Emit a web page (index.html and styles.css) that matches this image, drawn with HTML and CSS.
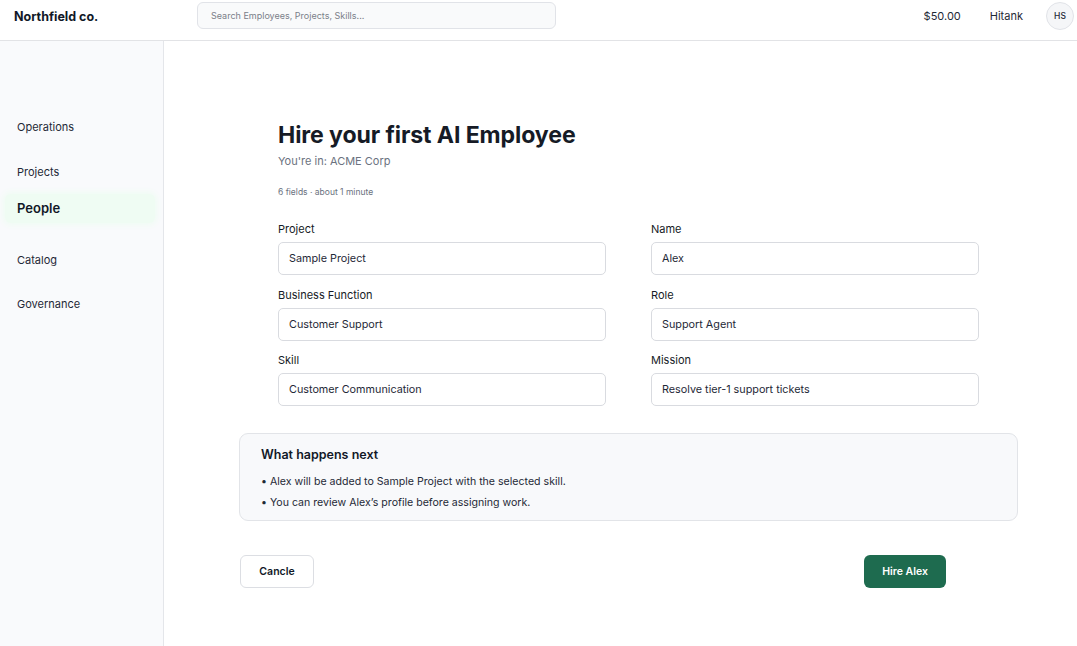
FILE: index.html
```html
<!DOCTYPE html>
<html lang="en">

<head>
    <meta charset="UTF-8">
    <meta name="viewport" content="width=device-width, initial-scale=1.0">
    <title>Northfield co. - Hire</title>
    <link rel="stylesheet" href="styles.css">
</head>

<body>
    <header class="topbar">
        <div class="brand">Northfield co.</div>
        <div class="search">Search Employees, Projects, Skills...</div>
        <div class="topbar-right">
            <span class="balance">$50.00</span>
            <span class="user-name">Hitank</span>
            <div class="avatar">HS</div>
        </div>
    </header>

    <div class="layout">
        <nav class="sidebar">
            <a class="nav-item">Operations</a>
            <a class="nav-item">Projects</a>
            <a class="nav-item active">People</a>
            <a class="nav-item">Catalog</a>
            <a class="nav-item">Governance</a>
        </nav>

        <main class="main">
            <div class="hire-panel">
                <div class="hire-form">
                    <h1>Hire your first AI Employee</h1>
                    <p class="subtitle">You're in: ACME Corp</p>
                    <p class="meta">6 fields · about 1 minute</p>

                    <div class="fields">
                        <div class="field">
                            <label>Project</label>
                            <div class="input">Sample Project</div>
                        </div>
                        <div class="field">
                            <label>Name</label>
                            <div class="input">Alex</div>
                        </div>
                        <div class="field">
                            <label>Business Function</label>
                            <div class="input">Customer Support</div>
                        </div>
                        <div class="field">
                            <label>Role</label>
                            <div class="input">Support Agent</div>
                        </div>
                        <div class="field">
                            <label>Skill</label>
                            <div class="input">Customer Communication</div>
                        </div>
                        <div class="field">
                            <label>Mission</label>
                            <div class="input">Resolve tier-1 support tickets</div>
                        </div>
                    </div>
                </div>

                <div class="next-box">
                    <h3>What happens next</h3>
                    <ul>
                        <li>Alex will be added to Sample Project with the selected skill.</li>
                        <li>You can review Alex’s profile before assigning work.</li>
                    </ul>
                </div>

                <div class="actions">
                    <button class="btn btn-secondary">Cancle</button>
                    <button class="btn btn-primary">Hire Alex</button>
                </div>
            </div>
        </main>
    </div>
</body>

</html>
```

FILE: styles.css
```css
* {
    margin: 0;
    padding: 0;
    box-sizing: border-box;
}

body {
    font-family: 'Inter', 'Liberation Sans', sans-serif;
    background: #fff;
    color: #111827;
    height: 646px;
    overflow: hidden;
}

/* top bar */
.topbar {
    height: 41px;
    display: flex;
    align-items: center;
    border-bottom: 1px solid #e2e3e6;
    padding: 0 3px 0 14px;
}

.brand {
    width: 183px;
    font-size: 12.5px;
    font-weight: 700;
    color: #111827;
    margin-top: -8px;
}

.search {
    width: 359px;
    height: 27px;
    margin-top: -9px;
    border: 1px solid #e1e3e8;
    border-radius: 6px;
    background: #f9fafb;
    font-size: 9px;
    color: #7b8089;
    padding: 0 13px;
    display: flex;
    align-items: center;
}

.topbar-right {
    margin-left: auto;
    display: flex;
    align-items: center;
    font-size: 11px;
    color: #1f2937;
    margin-top: -8px;
}

.balance {
    margin-right: 29px;
}

.user-name {
    margin-right: 23px;
}

.avatar {
    width: 28px;
    height: 28px;
    border-radius: 50%;
    border: 1px solid #e1e3e8;
    background: #f5f6f8;
    font-size: 8.5px;
    font-weight: 500;
    display: flex;
    align-items: center;
    justify-content: center;
}

/* sidebar + content */
.layout {
    display: flex;
    height: 605px;
}

.sidebar {
    width: 164px;
    background: #f9fafc;
    border-right: 1px solid #e4e6ea;
    display: flex;
    flex-direction: column;
    padding: 72px 8px 0 5px;
}

.nav-item {
    display: block;
    font-size: 11px;
    line-height: 14px;
    padding: 7px 12px;
    color: #1f2937;
    margin-bottom: 16px;
}

.nav-item:first-child {
    margin-bottom: 17px;
}

.nav-item.active {
    font-size: 13px;
    line-height: 15px;
    font-weight: 600;
    color: #111827;
    background: #effcf3;
    box-shadow: 0 0 6px 2px #effcf3;
    border-radius: 6px;
    margin-top: -8px;
    margin-bottom: 23px;
}

.main {
    flex: 1;
    padding: 79px 0 0 75px;
}

.hire-panel {
    width: 779px;
}

.hire-form {
    padding: 0 39px;
}

h1 {
    font-size: 23.1px;
    line-height: 30px;
    font-weight: 700;
    color: #161b26;
    letter-spacing: -0.1px;
}

.subtitle {
    font-size: 11px;
    line-height: 16px;
    color: #6b7280;
    margin-top: 3px;
}

.meta {
    font-size: 8.5px;
    line-height: 12px;
    color: #6b7280;
    margin-top: 17px;
}

.fields {
    display: grid;
    grid-template-columns: 328px 328px;
    column-gap: 45px;
    row-gap: 12.5px;
    margin-top: 24px;
}

.field label {
    display: block;
    font-size: 11px;
    line-height: 14px;
    color: #161b26;
    margin-bottom: 6px;
}

.input {
    height: 33px;
    border: 1px solid #d9dbe0;
    border-radius: 5px;
    background: #fff;
    font-size: 10.8px;
    color: #1f2937;
    padding: 0 10px;
    display: flex;
    align-items: center;
}

/* summary box */
.next-box {
    margin-top: 27px;
    height: 88px;
    background: #f8f9fb;
    border: 1px solid #e2e4e8;
    border-radius: 9px;
    padding: 12px 21px;
}

.next-box h3 {
    font-size: 12.5px;
    line-height: 18px;
    font-weight: 600;
    color: #111827;
    margin-bottom: 7px;
}

.next-box ul {
    list-style: none;
}

.next-box li {
    font-size: 10.6px;
    line-height: 21px;
    color: #1f2937;
}

.next-box li::before {
    content: '•';
    margin-right: 3px;
}

.actions {
    display: flex;
    justify-content: space-between;
    margin-top: 34px;
    padding: 0 72px 0 1px;
}

.btn {
    height: 33px;
    border-radius: 6px;
    font-family: inherit;
    font-size: 10.5px;
    font-weight: 600;
    cursor: pointer;
}

.btn-secondary {
    width: 74px;
    background: #fff;
    border: 1px solid #dcdee3;
    color: #111827;
}

.btn-primary {
    width: 82px;
    background: #1e6b4f;
    border: none;
    color: #fff;
}
```
